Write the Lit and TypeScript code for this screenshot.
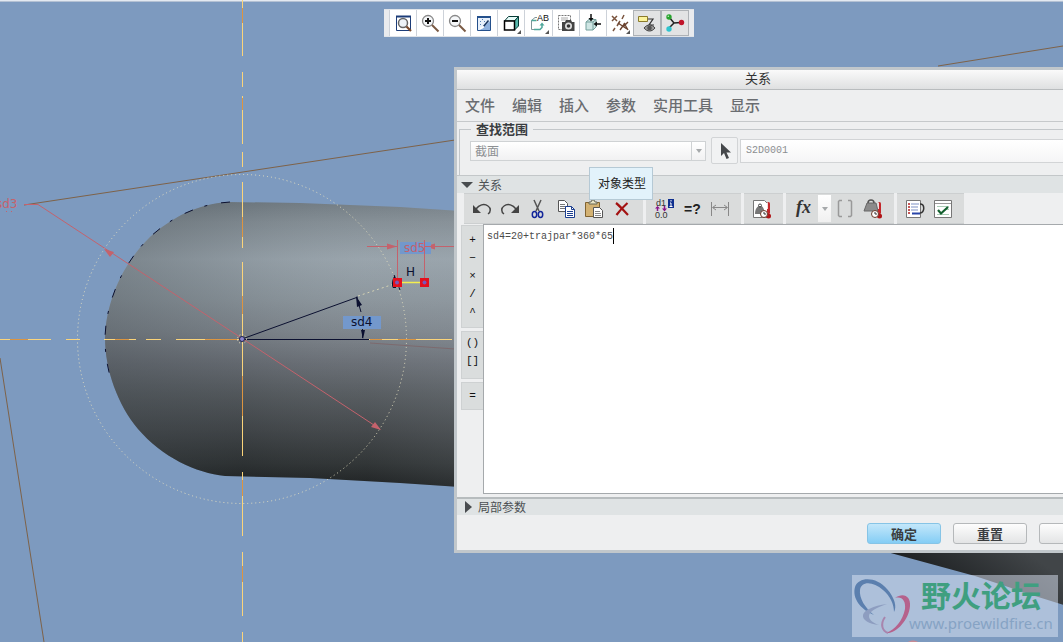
import { LitElement, html, svg, css, TemplateResult } from "lit";
import { customElement, state } from "lit/decorators.js";

const tick = svg`<path d="M20 17v4h-4z" fill="#555"/>`;
const thermo = svg`
  <path d="M16.500 4.500v9" stroke="#c3272b" stroke-width="3" stroke-linecap="round"/>
  <path d="M15.500 4v6" stroke="#f4dada"/>
  <circle cx="16.500" cy="17" r="2.500" fill="#b01518"/>
  <circle cx="12" cy="15" r="3.500" fill="#fff" stroke="#6b3a2a"/>
  <path d="M12 13v2h2" fill="none" stroke="#333"/>`;

const ICONS: Record<string, TemplateResult> = {
  zoomFit: svg`
    <path d="M3.500 17.500V3.500h14v14z" fill="#fff" stroke="#1c3c78"/>
    <path d="M3 3.500h15" stroke="#1c3c78" stroke-width="2"/>
    <circle cx="10" cy="10" r="4.500" fill="#eef3f8" stroke="#666" stroke-width="1.500"/>
    <path d="M13.500 13.500l4.500 4.500" stroke="#7a4a2c" stroke-width="2.200"/>`,
  zoomIn: svg`
    <circle cx="8" cy="8" r="5.500" fill="#f5f7f9" stroke="#888" stroke-width="1.300"/>
    <path d="M12 12l6.500 6.500" stroke="#7a5a44" stroke-width="2"/>
    <path d="M8 5v6M5 8h6" stroke="#111" stroke-width="2"/>`,
  zoomOut: svg`
    <circle cx="8" cy="8" r="5.500" fill="#f5f7f9" stroke="#888" stroke-width="1.300"/>
    <path d="M12 12l6.500 6.500" stroke="#7a5a44" stroke-width="2"/>
    <path d="M5 8h6" stroke="#111" stroke-width="2"/>`,
  repaint: svg`
    <path d="M3.500 3.500h13v14h-13z" fill="#e7f0fb" stroke="#24508c"/>
    <path d="M16 8v9H6z" fill="#8db0de"/>
    <path d="M3 4h14" stroke="#24508c" stroke-width="2"/>
    <path d="M9.500 13.500l5-6" stroke="#17335e" stroke-width="1.500"/>
    <path d="M6 8l1 1M8 6l1 1M6 12l1-1M10 8l1 1" stroke="#5680b5"/>
    <path d="M6 15.500c2 0 3-1 4-2" stroke="#fff" stroke-width="1.500" fill="none"/>`,
  cube: svg`
    <path d="M3.500 8l4-4.500h10l-4 4.500z" fill="#e6fbf8" stroke="#063b36"/>
    <path d="M13.500 8l4-4.500v9.500l-4 4z" fill="#59b8ac" stroke="#063b36"/>
    <path d="M3.500 8h10v9h-10z" fill="#fff" stroke="#000" stroke-width="1.500"/>${tick}`,
  views: svg`
    <path d="M8 4.500H6L2.500 7.500v9h6" fill="none" stroke="#7f9498"/>
    <path d="M2.500 7.500h5M5 16.500h6l2-2V11" fill="none" stroke="#4da79b" stroke-width="1.500"/>
    <path d="M10.500 12.500l2.500-3 2.500 3z" fill="#4da79b"/>
    <text x="8" y="8" font-size="9" font-family="Liberation Sans" fill="#111">AB</text>${tick}`,
  camera: svg`
    <path d="M2.500 2.500h12v14h-12z" fill="#fff" stroke="#777" stroke-dasharray="2 1"/>
    <path d="M5 5h7M5 7h7" stroke="#aaa"/>
    <path d="M6 9h3l1-2h5l1 2h2.500v9H6z" fill="#444"/>
    <circle cx="12.500" cy="13" r="3.500" fill="#ddd"/><circle cx="12.500" cy="13" r="1.800" fill="#333"/>`,
  orient: svg`
    <path d="M3 9l3-2.500h7V14l-3 3H3z" fill="#cfe6e4" stroke="#74a09c"/>
    <path d="M3 9h7v8M10 9l3-2.500" fill="none" stroke="#74a09c"/>
    <path d="M8 1v6M18 11h-6" stroke="#111" stroke-width="1.500"/>
    <path d="M5.500 5h5L8 8.500zM14 8.500v5L10.500 11z" fill="#111"/>`,
  datum: svg`
    <path d="M2 3l5 5M7 3L2 8M14 2l-2 4M10 8L7 13M5 15l-2 3" stroke="#7a543e" stroke-width="1.500"/>
    <path d="M8 10l9 6M10 17l5-7M14 10l4 7M13 14l5-5" stroke="#6b422e" stroke-width="1.400"/>${tick}`,
  annotate: svg`
    <path d="M1.500 3.500h9v5h-9z" fill="#fbf39b" stroke="#8a7a2b"/>
    <path d="M11 6h5l-4 6h5" fill="none" stroke="#333" stroke-width="1.200"/>
    <path d="M7 15c3-4 8-4 11 0-3 4-8 4-11 0z" fill="#999" stroke="#444"/>
    <circle cx="12.500" cy="15" r="2.300" fill="#555"/>`,
  spin: svg`
    <path d="M4 4l5 6 7-.5M9 10l-5 5" fill="none" stroke="#222" stroke-width="1.500"/>
    <circle cx="4" cy="4" r="2.700" fill="#27a32e"/><circle cx="16.500" cy="9.500" r="2.700" fill="#c0152b"/>
    <circle cx="4" cy="16" r="2.700" fill="#2fc4cf"/><circle cx="3.300" cy="3.300" r=".8" fill="#c5f2c5"/>`,
  undo: svg`
    <path d="M4 10c3-4 8-6 12-3 3 2 3 6 0 8" fill="none" stroke="#444" stroke-width="1.500"/>
    <path d="M1 6v8h8z" fill="#444"/>`,
  redo: svg`
    <path d="M16 10c-3-4-8-6-12-3-3 2-3 6 0 8" fill="none" stroke="#444" stroke-width="1.500"/>
    <path d="M19 6v8h-8z" fill="#444"/>`,
  cut: svg`
    <path d="M6 1l5 11M13 1L8 12" stroke="#555" stroke-width="1.500"/>
    <ellipse cx="6.500" cy="15.500" rx="2.200" ry="3" fill="none" stroke="#12259a" stroke-width="1.500"/>
    <ellipse cx="12.500" cy="15.500" rx="2.200" ry="3" fill="none" stroke="#12259a" stroke-width="1.500"/>`,
  copy: svg`
    <path d="M2.500 1.500h6l3 3v8h-9z" fill="#fff" stroke="#555"/>
    <path d="M4 5.500h5M4 7.500h6M4 9.500h6" stroke="#777"/>
    <path d="M9.500 7.500h6l3 3v8h-9z" fill="#fff" stroke="#1c3f90"/>
    <path d="M15.500 7.500v3h3M11 12.500h6M11 14.500h6M11 16.500h6" fill="none" stroke="#1c3f90"/>`,
  paste: svg`
    <path d="M1.500 3.500h14v14h-14z" fill="#d3b273" stroke="#806331"/>
    <path d="M5 5V3h2l1-2h2l1 2h2v2z" fill="#e9e4c6" stroke="#665"/>
    <path d="M9.500 8.500h6l3 3v7h-9z" fill="#fff" stroke="#555"/>
    <path d="M11 12.500h5M11 14.500h6M11 16.500h6" stroke="#888"/>`,
  remove: svg`<path d="M4 4c4 3 8 8 12 12M15.500 4C11 8 8 11 4.500 16" fill="none" stroke="#a31212" stroke-width="2.200"/>`,
  dims: svg`
    <text x="2" y="7" font-size="9" font-family="Liberation Sans" fill="#333">d1</text>
    <text x="1" y="19" font-size="9" font-family="Liberation Sans" fill="#333">0.0</text>
    <path d="M3.500 8v4M10.500 7v3" stroke="#8a148a" stroke-width="1.500"/>
    <path d="M1 9.500L3.500 7 6 9.500zM8 9.500l2.500 3 2.500-3z" fill="#8a148a"/>
    <path d="M14 0h6v9h-6z" fill="#0f2f8f"/>
    <path d="M17 1v1.500M16 4h1v3.500M15.500 7.500h3" stroke="#fff" fill="none"/>`,
  verify: svg`<text x="2" y="15" font-size="14" font-family="Liberation Sans" font-weight="700" fill="#222">=?</text>`,
  width: svg`
    <path d="M1.500 3v14M18.500 3v14M3 8.500h14" stroke="#888"/>
    <path d="M6 6L2.500 8.500 6 11M14 6l3.500 2.500L14 11" fill="none" stroke="#888"/>`,
  massPage: svg`
    <path d="M1.500 1.500h11l3 3v14h-14z" fill="#fff" stroke="#777"/>
    <path d="M3 15c0-5 2-8 5-8s4 2 5 8z" fill="#777"/><circle cx="8" cy="6.500" r="1.500" fill="none" stroke="#444"/>${thermo}`,
  fx: svg`<text x="2" y="14" font-size="18" font-style="italic" font-weight="700" font-family="Liberation Serif" fill="#333">fx</text>`,
  brackets: svg`<path d="M7 1.500H4.500l-1 1v14l1 1H7M13 1.500h2.500l1 1v14l-1 1H13" fill="none" stroke="#999" stroke-width="1.500"/>`,
  mass: svg`
    <path d="M1 12l3-8h9l2 8z" fill="#8b8b8b" stroke="#666"/><path d="M5 4c0-4 6-4 6 0" fill="none" stroke="#555" stroke-width="1.500"/>${thermo}`,
  list: svg`
    <path d="M1.500 1.500h14v17h-14z" fill="#fff" stroke="#777"/>
    <path d="M3 5h2M3 8h2M3 11h2M3 14h2" stroke="#b32020" stroke-width="1.500"/>
    <path d="M6 5h8M6 8h7M6 11h7" stroke="#7a8fc4"/>
    <path d="M7 14.500h8" stroke="#2744a8" stroke-width="2"/>
    <path d="M15 5c5 0 5 8 0 9" fill="none" stroke="#333" stroke-width="1.500"/>`,
  check: svg`
    <path d="M1.500 1.500h17v17h-17z" fill="#fff" stroke="#777"/>
    <path d="M2 4.500h16" stroke="#999"/><path d="M4 7.500h12M12 10.500h4M4 15.500h12" stroke="#a9cdb5"/>
    <path d="M5 11l3 3.500L15 8" fill="none" stroke="#14602f" stroke-width="2.200"/>`,
};

const icon = (name: string) =>
  html`<svg class="icon" viewBox="0 0 20 20" aria-hidden="true">${ICONS[name]}</svg>`;

const VIEW_TOOLS: [string, string][] = [
  ["zoomFit", "重新调整"], ["zoomIn", "放大"], ["zoomOut", "缩小"], ["repaint", "重画"],
  ["cube", "显示样式"], ["views", "已命名视图"], ["camera", "视图管理器"], ["orient", "视图法向"],
  ["datum", "基准显示"], ["annotate", "注释显示"], ["spin", "旋转中心"],
];

const EDIT_TOOLS: [string, string][][] = [
  [["undo", "撤消"], ["redo", "重做"], ["cut", "剪切"], ["copy", "复制"], ["paste", "粘贴"], ["remove", "删除"]],
  [["dims", "切换尺寸"], ["verify", "计算"], ["width", "尺寸"]],
  [["massPage", "单位"]],
  [["fx", "函数"], ["", "更多函数"], ["brackets", "参数"], ["mass", "质量单位"]],
  [["list", "排序关系"], ["check", "校验关系"]],
];

const OPERATORS = [["+", "−", "×", "/", "^"], ["()", "[]"], ["="]];

const TUBE = "M460 211L400 207 300 203 228 202C198 204 172 217 150 237 124 262 106 300 105 338 105 370 118 405 138 429 162 457 196 473 225 476L310 478 400 483 460 487Z";

@customElement("cad-scene")
class CadScene extends LitElement {
  static styles = css`
    :host { display: block; overflow: hidden; }
    svg { display: block; width: 100%; height: 100%; }
    text { font-family: "DejaVu Sans", "Noto Sans", sans-serif; font-size: 12px; }
    .edge { stroke: #7e6248; fill: none; }
    .axis { stroke: #fbd47a; fill: none; }
    .axis-warm { stroke: #dc9540; fill: none; }
    .dim { stroke: #c4626c; fill: none; }
    .dim-fill { fill: #c4626c; }
    .ink { stroke: #0b1030; fill: none; }
    .ink-fill { fill: #0b1030; }
    .tag { fill: #7398cc; }
  `;

  render() {
    return html`
      <svg viewBox="0 0 1063 642" preserveAspectRatio="xMinYMin slice">
        <defs>
          <linearGradient id="tube" gradientUnits="userSpaceOnUse" x1="0" y1="202" x2="0" y2="486">
            <stop offset="0" stop-color="#727c83"/>
            <stop offset=".07" stop-color="#848e95"/>
            <stop offset=".2" stop-color="#99a4ac"/>
            <stop offset=".34" stop-color="#8c969d"/>
            <stop offset=".46" stop-color="#7d848b"/>
            <stop offset=".56" stop-color="#696e75"/>
            <stop offset=".68" stop-color="#53585c"/>
            <stop offset=".8" stop-color="#404447"/>
            <stop offset=".92" stop-color="#2b2f30"/>
            <stop offset="1" stop-color="#181b1c"/>
          </linearGradient>
          <linearGradient id="shade" gradientUnits="userSpaceOnUse" x1="105" y1="0" x2="453" y2="0">
            <stop offset="0" stop-color="#40484e" stop-opacity=".35"/>
            <stop offset=".4" stop-color="#40484e" stop-opacity=".12"/>
            <stop offset=".75" stop-color="#a0a8ae" stop-opacity=".06"/>
            <stop offset="1" stop-color="#a0a8b0" stop-opacity=".14"/>
          </linearGradient>
          <linearGradient id="tail" gradientUnits="userSpaceOnUse" x1="960" y1="610" x2="1010" y2="540">
            <stop offset="0" stop-color="#1a1d1f"/>
            <stop offset="1" stop-color="#414548"/>
          </linearGradient>
        </defs>
        <rect width="1063" height="642" fill="#7d9abf"/>
        <path d="M0 .5h1063" stroke="#e3e9f1"/>
        <path d="M0 1.500h1063" stroke="#b4c1d3"/>

        <path d=${TUBE} fill="url(#tube)"/>
        <path d=${TUBE} fill="url(#shade)"/>
        <path class="ink" stroke-dasharray="9 14 3 12" d="M230 202C198 204 172 217 150 237 124 262 106 300 105 338 105 352 107 365 110 376"/>
        <path d="M876 549h194v58l-35-11-60-20z" fill="url(#tail)"/>

        <path class="edge" d="M24 205L455 140M938 66L1063 46M0 358L44 642"/>
        <path d="M370 343L455 349" stroke="#7d6a6e" fill="none"/>
        <circle cx="242" cy="339" r="164.500" fill="none" stroke="#e4dfc0" stroke-dasharray="1 3"/>
        <path d="M358 296l36-12" stroke="#d6d3b4" stroke-dasharray="2 3"/>

        <path class="axis" d="M242.500 0v56M242.500 72v15M242.500 96v48M242.500 152v15M242.500 182v66M242.500 262v194M242.500 472v64M242.500 552v64M242.500 632v10"/>
        <path class="axis" d="M0 339.500h51M66 339.500h14M104 339.500h32M146 339.500h15M176 339.500h276"/>
        <path class="axis-warm" d="M242.500 8v15M242.500 98v12M242.500 217v20M242.500 296v18M242.500 376v40M242.500 480v16M242.500 566v16M10 339.500h18M115 339.500h14M205 339.500h32M370 339.500h12M398 339.500h18"/>

        <g class="dim">
          <path d="M24 204.500h14L380 429"/>
          <path d="M367 246.500h30M425 246.500h30M397.500 240v40M424.500 240v40"/>
        </g>
        <path class="dim-fill" d="M104 249l10 3-4 5zM381 430l-10-3 4-5zM397 246.500l-10-3v6zM425 246.500l10-3v6z"/>
        <text x="-4" y="208" fill="#c4626c">sd3</text>
        <path d="M6 211.500h1M11 211.500h1" stroke="#c4626c"/>
        <rect class="tag" x="400" y="242" width="31" height="12"/>
        <text x="404" y="252" fill="#c4626c">sd5</text>
        <path class="dim" d="M424.500 240v14M425 246.500h6"/>

        <g class="ink">
          <path d="M242 339L358 297M242 339.500h127"/>
          <path d="M357 298l4 14M362.500 329v9M394 275l6 15"/>
        </g>
        <path class="ink-fill" d="M356 296l6 9-5 2zM363 339l-2-9h4z"/>
        <path class="ink-fill" d="M395 275l1 13h-3c-2-3-1-9 2-13z"/>
        <rect class="tag" x="343" y="316" width="38" height="13"/>
        <text class="ink-fill" x="351" y="326">sd4</text>
        <text class="ink-fill" x="406" y="276">H</text>
        <path d="M402 282.500h18" stroke="#f4ee4e" stroke-width="1.500"/>
        <path d="M393 278h9v9h-9zM420 278h9v9h-9z" fill="#e3101c"/>
        <circle cx="397" cy="282.500" r="2" fill="#7a56b8"/><circle cx="424.500" cy="282.500" r="2" fill="#7a56b8"/>
        <circle cx="242" cy="339" r="4.500" fill="none" stroke="#eee3c0" stroke-dasharray="1 2"/>
        <circle cx="242" cy="339" r="2.500" fill="#8c86d0" stroke="#20244a"/>
        <path d="M908 642c3-2 7-2 10 0z" fill="#c58a94"/>
      </svg>
    `;
  }
}

@customElement("relation-dialog")
class RelationDialog extends LitElement {
  @state() private relation = "sd4=20+trajpar*360*65";

  static styles = css`
    :host {
      display: flex;
      flex-direction: column;
      overflow: hidden;
      box-sizing: border-box;
      border: 3px solid #c1c7cb;
      border-right: 0;
      background: #eeeff0;
      color: #4c5053;
      font: 13px/18px "Noto Sans CJK SC", sans-serif;
    }
    * { box-sizing: border-box; }
    button { font: inherit; color: inherit; padding: 0; margin: 0; border: 0; background: none; }
    .title {
      margin: 0;
      height: 20px;
      padding-right: 4px;
      font-size: 13px;
      line-height: 16px;
      font-weight: 400;
      text-align: center;
      color: #333;
      background: linear-gradient(#fafafa, #dfe0e1);
      border-bottom: 1px solid #b9bcbe;
    }
    .menu {
      display: flex;
      gap: 17px;
      height: 32px;
      padding: 0 8px 2px;
      align-items: center;
      border-bottom: 1px solid #c6c9cb;
    }
    .menu button { font-size: 15px; font-weight: 500; color: #6a6d71; white-space: nowrap; }
    .scope {
      margin: 0 -20px 0 2px;
      padding: 1px 8px 11px 10px;
      min-width: 0;
      border: 1px solid #c3c7ca;
      border-bottom: 0;
    }
    .scope legend {
      padding: 0 5px;
      margin-left: 1px;
      font-size: 13px;
      line-height: 14px;
      font-weight: 700;
      color: #3a3d40;
    }
    .row { display: flex; align-items: center; gap: 5px; }
    .combo {
      display: flex;
      flex: 0 0 236px;
      height: 20px;
      border: 1px solid #cfd2d4;
      background: linear-gradient(#fff, #f1f1f2);
    }
    .combo select {
      flex: 1;
      appearance: none;
      border: 0;
      padding: 0 4px;
      background: none;
      font: 12px/16px "Noto Sans CJK SC", sans-serif;
      color: #8d9093;
      opacity: 1;
    }
    .drop { width: 14px; display: grid; place-items: center; border-left: 1px solid #cfd2d4; }
    .drop::after, .more::after {
      content: "";
      border: 3px solid transparent;
      border-top: 4px solid #a6a9ab;
      border-bottom: 0;
    }
    .pick { display: grid; place-items: center; width: 27px; height: 27px; border: 1px solid #d2d4d6; border-radius: 2px; background: #f1f2f3; }
    .pick svg { width: 16px; height: 18px; }
    .name {
      flex: 1;
      min-width: 0;
      height: 24px;
      margin-left: -3px;
      padding: 0 5px;
      border: 1px solid #d2d4d6;
      background: linear-gradient(#fff, #f5f5f6);
      font: 10px/14px "Liberation Mono", monospace;
      color: #8b8e91;
    }
    .section {
      display: flex;
      align-items: center;
      gap: 5px;
      width: 100%;
      height: 17px;
      padding-left: 4px;
      font-size: 12px;
      line-height: 14px;
      background: #dfe3e4;
      border-top: 1px solid #c3c7c9;
    }
    .section.open { height: 18px; }
    .section svg { width: 12px; height: 12px; fill: #484c4f; }
    .tools { display: flex; gap: 3px; padding-left: 7px; height: 31px; }
    .group { display: flex; padding: 0 7px 0 4px; background: #dadcdc; border: solid #cccfd0; border-width: 1px 0; }
    .tool { display: grid; place-items: center; width: 28px; }
    .icon { width: 20px; height: 20px; overflow: visible; }
    .more { display: grid; place-items: center; width: 13px; margin: 1px 0; background: linear-gradient(#fff, #f0f0f0); }
    .editor { display: flex; height: 270px; padding-left: 4px; }
    .ops { display: flex; flex-direction: column; gap: 3px; width: 22px; padding-top: 1px; }
    .op-group { display: flex; flex-direction: column; padding: 2px 0 8px; background: #dadddd; border: 1px solid #ced1d2; border-right: 0; }
    .op-group button { height: 18px; font: 11px/18px "Liberation Mono", monospace; color: #111; }
    .op-group:first-child { padding: 5px 0 6px; }
    .op-group:last-child { padding: 4px 0; }
    .sheet { position: relative; flex: 1; display: flex; }
    .sheet textarea {
      flex: 1;
      resize: none;
      outline: 0;
      border: solid #a5a9ac;
      border-width: 1px 0 1px 1px;
      padding: 5px 3px;
      background: #fff;
      font: 10px/14px "Liberation Mono", monospace;
      color: #4b4b4b;
      caret-color: transparent;
    }
    .caret {
      position: absolute;
      top: 4px;
      left: calc(4px + var(--column) * 1ch);
      width: 1px;
      height: 16px;
      background: #000;
      font: 10px/14px "Liberation Mono", monospace;
    }
    .local { margin-top: 3px; border-top: 2px solid #b7bcbe; height: 18px; }
    .actions { display: flex; justify-content: flex-end; gap: 12px; margin: 8px -50px 6px 0; }
    .actions button {
      flex: 0 0 74px;
      height: 21px;
      line-height: 18px;
      font-weight: 700;
      color: #3a3d40;
      border: 1px solid #b5b8ba;
      border-radius: 3px;
      background: linear-gradient(#fdfdfd, #e3e4e5);
    }
    .actions .primary { border-color: #86c4e6; background: linear-gradient(#c3e7fa, #84cdf5); }
    .tip {
      position: absolute;
      left: 132px;
      top: 97px;
      padding: 6px 6px 7px 8px;
      border: 1px solid #b5c9d5;
      background: #e2f2fb;
      color: #222;
      font-size: 12px;
      white-space: nowrap;
    }
  `;

  render() {
    return html`
      <h1 class="title">关系</h1>
      <nav class="menu">
        ${["文件", "编辑", "插入", "参数", "实用工具", "显示"].map((m) => html`<button>${m}</button>`)}
      </nav>
      <fieldset class="scope">
        <legend>查找范围</legend>
        <div class="row">
          <div class="combo">
            <select aria-label="对象类型" disabled><option>截面</option></select>
            <span class="drop"></span>
          </div>
          <button class="pick" aria-label="选择">
            <svg viewBox="0 0 16 18"><path d="M4 1v13l3-3 2.500 6 2.500-1-2.500-5.500H14z" fill="#45484b"/></svg>
          </button>
          <input class="name" aria-label="名称" value="S2D0001" disabled />
        </div>
      </fieldset>
      <button class="section open">
        <svg viewBox="0 0 12 12"><path d="M0 3h12L6 9z"/></svg>关系
      </button>
      <div class="tools">
        ${EDIT_TOOLS.map((group) => html`
          <div class="group">
            ${group.map(([name, label]) => name
              ? html`<button class="tool" aria-label=${label}>${icon(name)}</button>`
              : html`<button class="more" aria-label=${label}></button>`)}
          </div>`)}
      </div>
      <div class="editor">
        <div class="ops">
          ${OPERATORS.map((group) => html`
            <div class="op-group">${group.map((op) => html`<button>${op}</button>`)}</div>`)}
        </div>
        <div class="sheet">
          <textarea aria-label="关系" spellcheck="false" .value=${this.relation}
            @input=${(e: Event) => (this.relation = (e.target as HTMLTextAreaElement).value)}></textarea>
          <span class="caret" style="--column:${this.relation.length}"></span>
        </div>
      </div>
      <button class="section local">
        <svg viewBox="0 0 12 12"><path d="M4 0l7 6-7 6z"/></svg>局部参数
      </button>
      <div class="actions">
        <button class="primary">确定</button>
        <button>重置</button>
        <button aria-label="取消"></button>
      </div>
      <div class="tip" role="tooltip">对象类型</div>
    `;
  }
}

@customElement("app-root")
class AppRoot extends LitElement {
  static styles = css`
    :host { display: block; position: relative; height: 100vh; overflow: hidden; background: #7d9abf; }
    .scene { position: absolute; inset: 0; }
    .viewbar {
      position: absolute;
      left: 384px;
      top: 9px;
      display: flex;
      box-sizing: border-box;
      width: 310px;
      height: 28px;
      padding: 0 5px;
      background: #e9ebee;
      border: 1px solid #dfe3e8;
      border-width: 1px 0;
    }
    .viewbar button {
      flex: 1;
      display: grid;
      place-items: center;
      padding: 0;
      border: 0;
      border-left: 1px solid #cdd2d9;
      background: #fff;
    }
    .viewbar button:nth-last-child(-n + 2) { border: 1px solid #aeb2b6; background: #e2e3e4; }
    .icon { width: 20px; height: 20px; overflow: visible; }
    .window { position: absolute; left: 454px; top: 67px; right: 0; }
    .mark {
      position: absolute;
      right: 5px;
      bottom: 5px;
      display: grid;
      grid-template-columns: 57px auto;
      box-sizing: border-box;
      width: 206px;
      height: 62px;
      background: rgba(222, 230, 245, 0.5);
      white-space: nowrap;
    }
    .logo { width: 64px; height: 62px; }
    .words { display: flex; flex-direction: column; }
    .brand { padding-left: 12px; font: 700 30px/38px "Noto Sans CJK SC", sans-serif; color: #3f9f80; }
    .site { font: 15px/20px "Noto Sans", sans-serif; color: #86a3c4; text-decoration: none; }
  `;

  render() {
    return html`
      <cad-scene class="scene"></cad-scene>
      <div class="viewbar" role="toolbar">
        ${VIEW_TOOLS.map(([name, label]) => html`<button aria-label=${label}>${icon(name)}</button>`)}
      </div>
      <relation-dialog class="window"></relation-dialog>
      <div class="mark">
        <svg class="logo" viewBox="0 0 64 62" fill="none">
          <path fill="#5b7fae" fill-rule="evenodd" d="M22 40C8 34 0 23 3 12 7 1 25 2 35 14c8 9 10 18 7 23 0-8-4-16-11-22C21 6 9 6 8 15c-1 8 5 18 14 25z"/>
          <path fill="#8d9dc0" fill-rule="evenodd" d="M27 50C17 49 10 45 11 40c1-5 10-9 24-11-12 4-18 8-18 12 0 4 4 7 10 9z"/>
          <path fill="#b5628c" fill-rule="evenodd" d="M43 23c8-6 16-2 15 8-1 14-14 28-24 27 9-3 17-13 19-24 1-8-3-13-10-11z"/>
          <path stroke="#a885ad" stroke-width="2" d="M36 58c-6-2-8-9-3-16"/>
        </svg>
        <div class="words">
          <span class="brand">野火论坛</span>
          <a class="site" href="#">www.proewildfire.cn</a>
        </div>
      </div>
    `;
  }
}
